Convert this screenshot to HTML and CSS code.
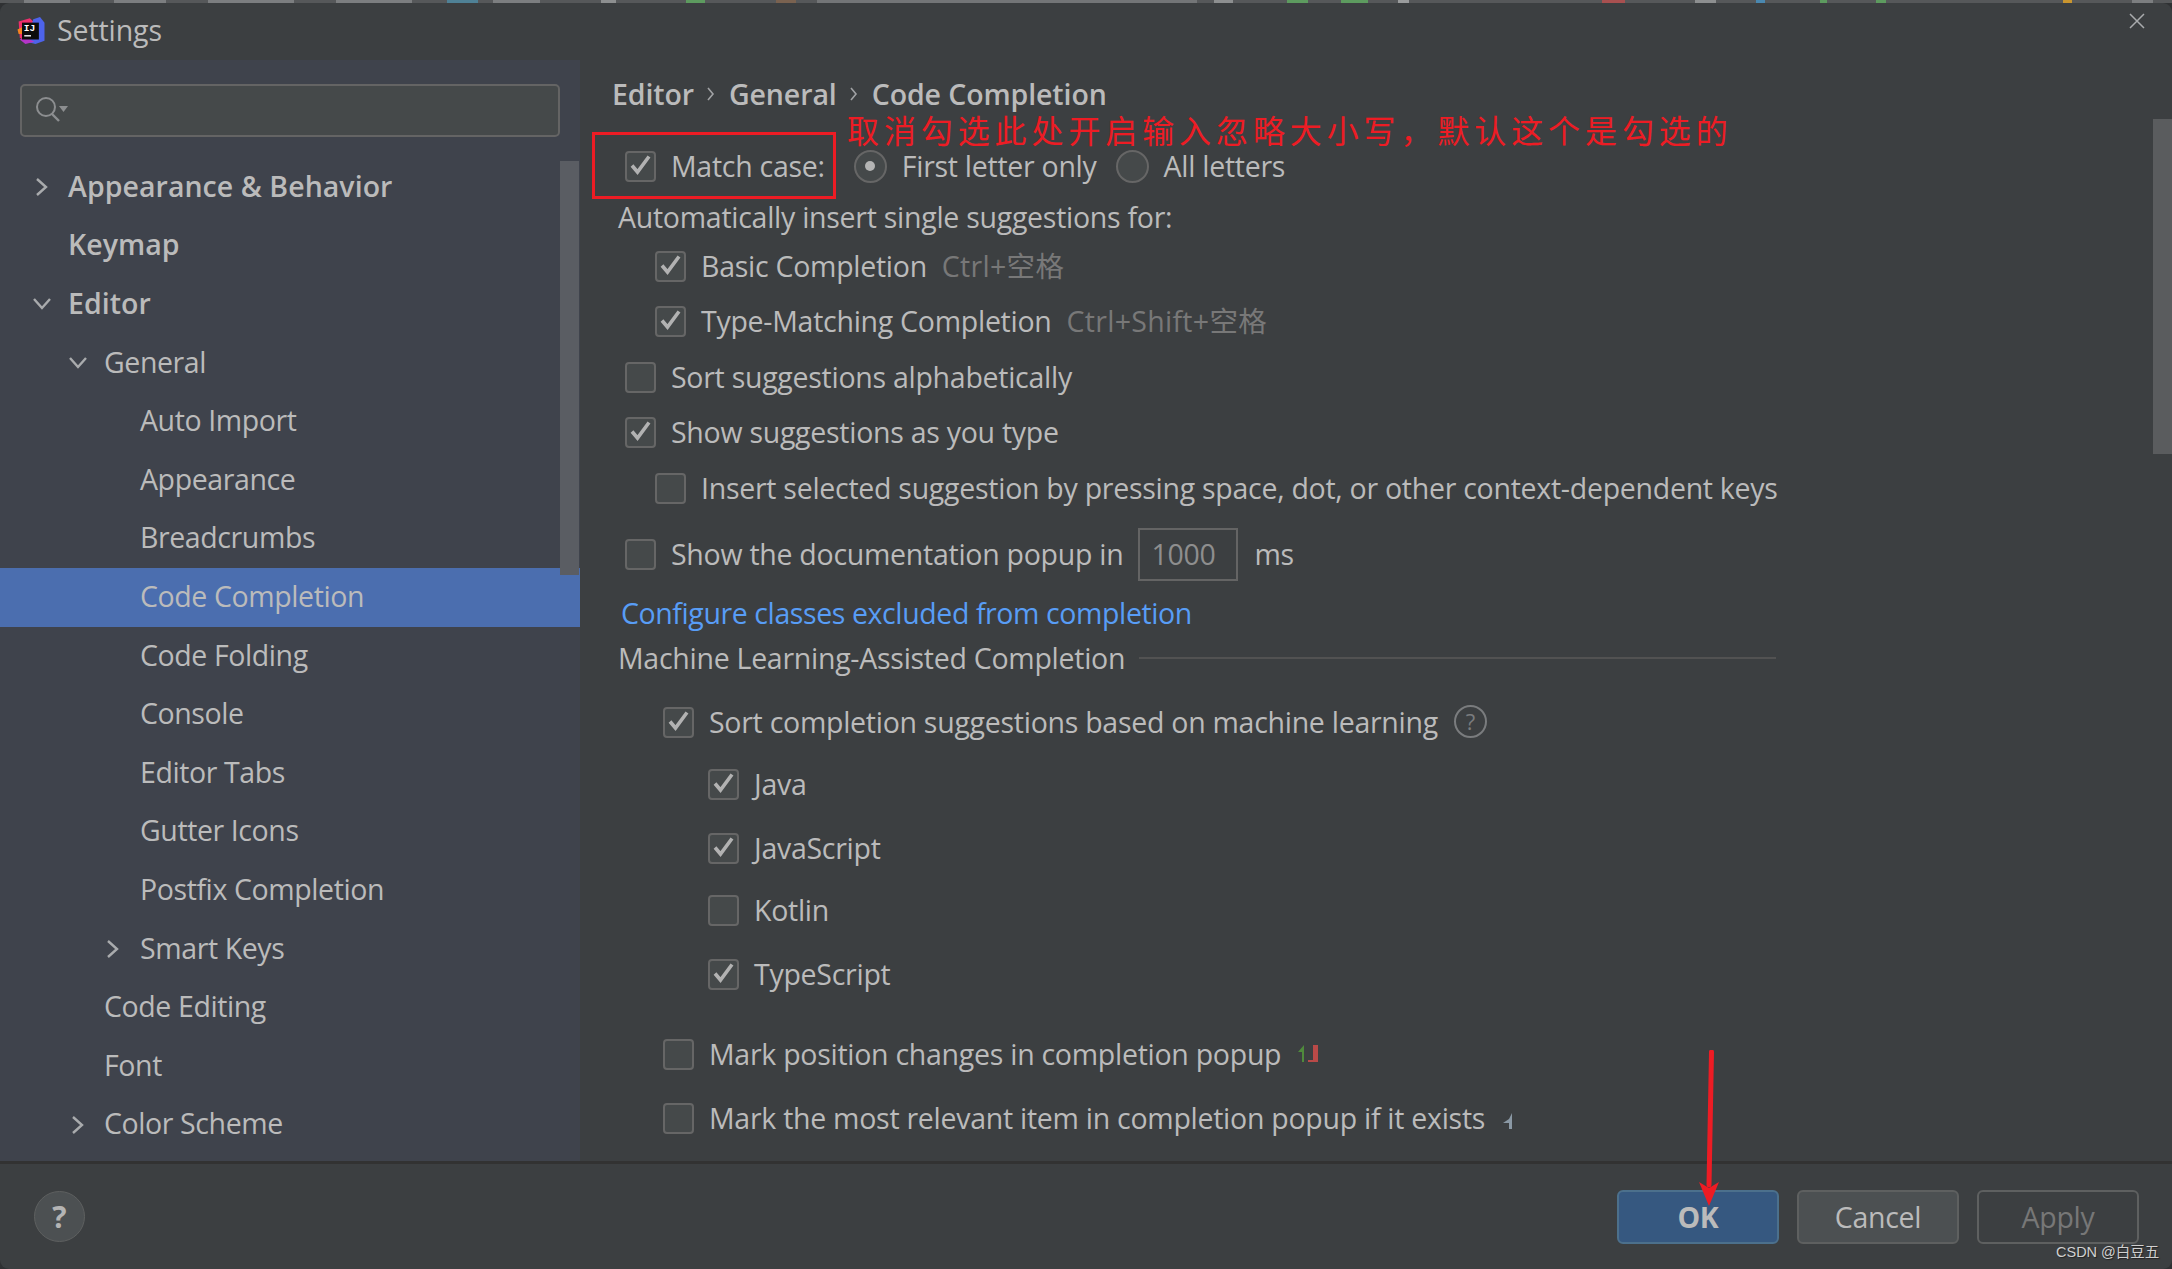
FILE: index.html
```html
<!DOCTYPE html>
<html lang="en">
<head>
  <meta charset="UTF-8">
  <title>Settings</title>
  <link rel="stylesheet" href="styles.css">
</head>
<body>
  <svg class="defs" width="0" height="0">
    <symbol id="tick" viewBox="0 0 31 31">
      <path d="M7 15.500l5.500 6.500L24 6.500" fill="none" stroke="#b2b2b2" stroke-width="3.600"/>
    </symbol>
    <symbol id="chev-r" viewBox="0 0 14 20">
      <path d="M2 2l9 8-9 8" fill="none" stroke="#a9abad" stroke-width="2.400"/>
    </symbol>
    <symbol id="chev-d" viewBox="0 0 20 14">
      <path d="M2 2l8 9 8-9" fill="none" stroke="#a9abad" stroke-width="2.400"/>
    </symbol>
  </svg>

  <!-- editor window peeking out above the dialog -->
  <div class="backdrop"></div>

  <div class="dialog">
    <header class="titlebar">
      <svg class="logo" width="28" height="27" viewBox="0 0 24 24">
        <path d="M1 4l10-3 3 3-8 18-4-4z" fill="#ee2d6c"/>
        <path d="M0 11l4-2v6l-3 0z" fill="#f58220"/>
        <path d="M14 2l6-2 4 5v16l-8 3-8-2z" fill="#4d63ea"/>
        <path d="M2 20l5 4 8-2-8-4z" fill="#b435c8"/>
        <rect x="4" y="5" width="15" height="15" fill="#0c0c0c"/>
        <text x="5.500" y="12.500" class="logo-text">IJ</text>
        <rect x="6" y="16" width="6" height="1.400" fill="#ddd"/>
      </svg>
      <span class="title">Settings</span>
      <svg class="close" width="16" height="16" viewBox="0 0 16 16">
        <path d="M1 1l14 14M15 1L1 15" stroke="#a9abad" stroke-width="1.500" fill="none"/>
      </svg>
    </header>

    <div class="main">
      <aside class="sidebar">
        <div class="search">
          <svg width="34" height="28" viewBox="0 0 34 28">
            <circle cx="12" cy="12" r="9" fill="none" stroke="#8c8e90" stroke-width="2"/>
            <path d="M18 19l7 7" stroke="#8c8e90" stroke-width="2.400"/>
            <path d="M25 11h9l-4.500 6z" fill="#8c8e90"/>
          </svg>
        </div>
        <ul class="tree">
          <li class="node bold lvl0"><svg class="chev-r"><use href="#chev-r"/></svg>Appearance &amp; Behavior</li>
          <li class="node bold lvl0">Keymap</li>
          <li class="node bold lvl0"><svg class="chev-d"><use href="#chev-d"/></svg>Editor</li>
          <li class="node lvl1"><svg class="chev-d"><use href="#chev-d"/></svg>General</li>
          <li class="node lvl2">Auto Import</li>
          <li class="node lvl2">Appearance</li>
          <li class="node lvl2">Breadcrumbs</li>
          <li class="node lvl2 selected">Code Completion</li>
          <li class="node lvl2">Code Folding</li>
          <li class="node lvl2">Console</li>
          <li class="node lvl2">Editor Tabs</li>
          <li class="node lvl2">Gutter Icons</li>
          <li class="node lvl2">Postfix Completion</li>
          <li class="node lvl2"><svg class="chev-r"><use href="#chev-r"/></svg>Smart Keys</li>
          <li class="node lvl1">Code Editing</li>
          <li class="node lvl1">Font</li>
          <li class="node lvl1"><svg class="chev-r"><use href="#chev-r"/></svg>Color Scheme</li>
        </ul>
        <div class="side-scroll"></div>
      </aside>

      <section class="content">
        <nav class="crumbs">
          <span>Editor</span><svg class="crumb-sep" width="8" height="14" viewBox="0 0 8 14"><path d="M1 1l5 6-5 6" fill="none" stroke="#a0a2a4" stroke-width="1.600"/></svg>
          <span>General</span><svg class="crumb-sep" width="8" height="14" viewBox="0 0 8 14"><path d="M1 1l5 6-5 6" fill="none" stroke="#a0a2a4" stroke-width="1.600"/></svg>
          <span>Code Completion</span>
        </nav>

        <div class="row base first">
          <span class="check"><svg><use href="#tick"/></svg></span><span class="label-match">Match case:</span>
          <span class="radio on"></span><span class="label-first">First letter only</span>
          <span class="radio"></span><span>All letters</span>
        </div>
        <div class="row text-row m11">Automatically insert single suggestions for:</div>
        <div class="row ind1 m9">
          <span class="check"><svg><use href="#tick"/></svg></span><span>Basic Completion</span><span class="hint">Ctrl+空格</span>
        </div>
        <div class="row ind1 m15">
          <span class="check"><svg><use href="#tick"/></svg></span><span>Type-Matching Completion</span><span class="hint">Ctrl+Shift+空格</span>
        </div>
        <div class="row base">
          <span class="check"></span><span>Sort suggestions alphabetically</span>
        </div>
        <div class="row base m15">
          <span class="check"><svg><use href="#tick"/></svg></span><span>Show suggestions as you type</span>
        </div>
        <div class="row ind1">
          <span class="check"></span><span>Insert selected suggestion by pressing space, dot, or other context-dependent keys</span>
        </div>
        <div class="row base m26">
          <span class="check"></span><span>Show the documentation popup in</span>
          <span class="num-input">1000</span><span>ms</span>
        </div>
        <a class="row link m19">Configure classes excluded from completion</a>
        <div class="row text-row m5 group-title">
          <span>Machine Learning-Assisted Completion</span><span class="rule"></span>
        </div>

        <div class="row ml m24">
          <span class="check"><svg><use href="#tick"/></svg></span><span>Sort completion suggestions based on machine learning</span>
          <span class="help-ring">?</span>
        </div>
        <div class="row ml2 m22">
          <span class="check"><svg><use href="#tick"/></svg></span><span>Java</span>
        </div>
        <div class="row ml2 m24">
          <span class="check"><svg><use href="#tick"/></svg></span><span>JavaScript</span>
        </div>
        <div class="row ml2 m22">
          <span class="check"></span><span>Kotlin</span>
        </div>
        <div class="row ml2 m24">
          <span class="check"><svg><use href="#tick"/></svg></span><span>TypeScript</span>
        </div>
        <div class="row ml m40">
          <span class="check"></span><span>Mark position changes in completion popup</span>
          <svg class="updown" width="21" height="18" viewBox="0 0 21 18">
            <path d="M5 17V7H1l6-7v17z" fill="#4f8a3c"/>
            <path d="M16 0h5v17H11v-2h5z" fill="#b94a48"/>
          </svg>
        </div>
        <div class="row ml m24">
          <span class="check"></span><span>Mark the most relevant item in completion popup if it exists</span>
          <svg class="relevant" width="10" height="16" viewBox="0 0 10 16">
            <path d="M9 0v16H6v-6H0l6-4z" fill="#8a98a4"/>
          </svg>
        </div>
        <div class="main-scroll"></div>
      </section>
    </div>

    <footer class="footer">
      <button class="round-help">?</button>
      <div class="buttons">
        <button class="btn primary">OK</button>
        <button class="btn">Cancel</button>
        <button class="btn disabled">Apply</button>
      </div>
    </footer>
  </div>

  <!-- hand-drawn notes on top of the dialog -->
  <div class="note-box"></div>
  <div class="note-text">取消勾选此处开启输入忽略大小写，默认这个是勾选的</div>
  <svg class="note-arrow" width="30" height="160" viewBox="0 0 30 160">
    <path d="M14.500 2L12 135" stroke="#ed1c24" stroke-width="5" stroke-linecap="round" fill="none"/>
    <path d="M2 132l10 6 10-6-10 24z" fill="#ed1c24"/>
  </svg>
  <div class="watermark">CSDN @白豆五</div>
</body>
</html>
```

FILE: styles.css
```css
* { box-sizing: border-box; }

html, body { height: 100%; }

body {
  margin: 0;
  overflow: hidden;
  position: relative;
  background: #2f3133;
  color: #bbbbbb;
  font-family: "Open Sans", "Noto Sans CJK SC", sans-serif;
  font-size: 28.5px;
  line-height: 34px;
  letter-spacing: -0.27px;
}

.defs { position: absolute; }

/* top strip: tops of the toolbar text and icons behind the dialog */
.backdrop {
  height: 3px;
  background: linear-gradient(90deg,
    #56585a 24px, #7c7e80 24px 70px, #56585a 70px 114px, #7c7e80 114px 166px,
    #56585a 166px 208px, #7c7e80 208px 294px, #56585a 294px 336px, #7c7e80 336px 412px,
    #56585a 412px 447px, #4f8196 447px 478px, #56585a 478px 493px, #7c7e80 493px 540px,
    #56585a 540px 601px, #8d8f90 601px 616px, #56585a 616px 686px, #5d9b5f 686px 705px,
    #56585a 705px 776px, #7a6250 776px 796px, #56585a 796px 817px, #737577 817px 1197px,
    #56585a 1197px 1214px, #8d8f90 1214px 1233px, #56585a 1233px 1287px, #5d9b5f 1287px 1308px,
    #56585a 1308px 1341px, #5d9b5f 1341px 1368px, #56585a 1368px 1398px, #9a9c9d 1398px 1409px,
    #56585a 1409px 1602px, #a85050 1602px 1625px, #56585a 1625px 1695px, #8d8f90 1695px 1716px,
    #56585a 1716px 1756px, #4a88b0 1756px 1765px, #56585a 1765px 1820px, #5d9b5f 1820px 1827px,
    #56585a 1827px 1876px, #5d9b5f 1876px 1886px, #56585a 1886px 2063px, #c9952f 2063px 2072px,
    #56585a 2072px 2132px, #7c7e80 2132px 2153px, #56585a 2153px);
}

.dialog {
  height: 1266px;
  display: flex;
  flex-direction: column;
  background: #3c3f41;
  border-radius: 9px;
  overflow: hidden;
}

/* title bar */
.titlebar {
  height: 57px;
  flex: none;
  display: flex;
  align-items: center;
  padding: 0 27px 3px 17px;
}
.logo { margin-right: 12px; }
.logo-text {
  font: bold 8.500px "Liberation Mono", monospace;
  fill: #ffffff;
  letter-spacing: 0;
}
.title { font-size: 28.5px; letter-spacing: -0.1px; }
.close { margin-left: auto; margin-top: -19px; }

.main {
  flex: 1;
  min-height: 0;
  display: flex;
}

/* left tree */
.sidebar {
  width: 580px;
  flex: none;
  position: relative;
  overflow: hidden;
  background: #3f434c;
  padding-top: 24px;
}
.search {
  width: 540px;
  height: 53px;
  margin-left: 20px;
  padding: 9px 0 0 12px;
  background: #45494a;
  border: 2.500px solid #646464;
  border-radius: 5px;
}
.tree {
  list-style: none;
  margin: 21px 0 0;
  padding: 0;
}
.node {
  height: 58.6px;
  padding-bottom: 3px;
  display: flex;
  align-items: center;
  position: relative;
  white-space: nowrap;
  letter-spacing: -0.4px;
}
.bold { font-weight: 600; letter-spacing: 0.05px; }
.lvl0 { padding-left: 68px; }
.lvl1 { padding-left: 104px; }
.lvl2 { padding-left: 140px; }
.selected { background: #4b6eaf; }
.chev-r, .chev-d { position: absolute; top: 50%; }
.chev-r { width: 14px; height: 20px; margin-top: -10px; }
.chev-d { width: 20px; height: 14px; margin-top: -7px; }
.lvl0 .chev-r { left: 35px; }
.lvl0 .chev-d { left: 32px; }
.lvl1 .chev-r { left: 71px; }
.lvl1 .chev-d { left: 68px; }
.lvl2 .chev-r { left: 106px; }

.side-scroll {
  position: absolute;
  left: 560px;
  top: 101px;
  width: 19px;
  height: 414px;
  background: #5a5d63;
}

/* options panel */
.content {
  flex: 1;
  position: relative;
  padding: 14px 0 0 32px;
}
.crumbs {
  height: 40px;
  display: flex;
  align-items: center;
  font-weight: 600;
  letter-spacing: -0.1px;
  line-height: 30px;
}
.crumb-sep { margin: 0 14px 0 13px; }

.row {
  height: 40px;
  margin-top: 16px;
  display: flex;
  align-items: center;
  white-space: nowrap;
}
.first { margin-top: 32px; }
.m5 { margin-top: 5px; }
.m9 { margin-top: 9px; }
.m11 { margin-top: 11px; }
.m15 { margin-top: 15px; }
.m19 { margin-top: 19px; }
.m22 { margin-top: 22px; }
.m24 { margin-top: 24px; }
.m26 { margin-top: 26px; }
.m40 { margin-top: 40px; }

.base { padding-left: 13px; }
.ind1 { padding-left: 43px; }
.ml { padding-left: 51px; }
.ml2 { padding-left: 96px; }
.text-row { padding-left: 6px; }

.check {
  width: 31px;
  height: 31px;
  flex: none;
  margin-right: 15px;
  background: #45494a;
  border: 2.500px solid #666666;
  border-radius: 4px;
  position: relative;
}
.check svg {
  position: absolute;
  left: -2.500px;
  top: -2.500px;
  width: 31px;
  height: 31px;
}

.radio {
  width: 33px;
  height: 33px;
  flex: none;
  margin-right: 15px;
  border: 2.500px solid #666666;
  border-radius: 50%;
  background: #45494a;
  position: relative;
}
.radio.on::after {
  content: "";
  position: absolute;
  left: 9px;
  top: 9px;
  width: 10px;
  height: 10px;
  border-radius: 50%;
  background: #b4b4b4;
}
.label-match { margin-right: 29px; }
.label-first { margin-right: 19px; }

.hint {
  color: #787878;
  margin-left: 15px;
  letter-spacing: 0.3px;
}

.num-input {
  width: 100px;
  height: 53px;
  flex: none;
  margin: 0 16px 0 15px;
  padding-left: 11px;
  display: flex;
  align-items: center;
  color: #8e8e8e;
  border: 2.500px solid #646464;
}

.link {
  padding-left: 9px;
  color: #589df6;
  letter-spacing: -0.4px;
}

.group-title { gap: 14px; }
.rule {
  width: 637px;
  height: 2.500px;
  background: #525252;
}

.help-ring {
  width: 33px;
  height: 33px;
  flex: none;
  margin-left: 16px;
  margin-top: -2px;
  border: 2px solid #7a7c7e;
  border-radius: 50%;
  color: #7a7c7e;
  font-size: 22px;
  letter-spacing: 0;
  display: flex;
  align-items: center;
  justify-content: center;
}
.updown { margin-left: 16px; }
.relevant { margin-left: 18px; margin-top: 6px; }

.main-scroll {
  position: absolute;
  right: 0;
  top: 59px;
  width: 19px;
  height: 335px;
  background: #5a5c5e;
}

/* bottom buttons */
.footer {
  height: 108px;
  flex: none;
  display: flex;
  align-items: center;
  justify-content: space-between;
  padding: 0 33px 0 34px;
  border-top: 3px solid #323232;
}
.round-help {
  width: 51px;
  height: 51px;
  padding: 0;
  border: 1.500px solid #5e6060;
  border-radius: 50%;
  background: #4c5052;
  color: #b4b4b4;
  font: bold 30px "Open Sans", sans-serif;
}
.buttons {
  display: flex;
  gap: 18px;
}
.btn {
  width: 162px;
  height: 54px;
  padding: 0;
  background: #4c5052;
  border: 2.500px solid #5e6060;
  border-radius: 6px;
  color: #bbbbbb;
  font: 28.5px "Open Sans", sans-serif;
  letter-spacing: -0.27px;
}
.btn.primary {
  background: #365880;
  border-color: #4c708c;
  font-weight: 700;
}
.btn.disabled {
  background: transparent;
  color: #777777;
}

/* annotations */
.note-box {
  position: absolute;
  left: 592px;
  top: 132px;
  width: 244px;
  height: 67px;
  border: 3px solid #ed1c24;
}
.note-text {
  position: absolute;
  left: 847px;
  top: 112px;
  color: #ed1c24;
  font-family: "Noto Sans CJK SC", sans-serif;
  font-size: 32px;
  letter-spacing: 4.9px;
  line-height: 34px;
  white-space: nowrap;
}
.note-arrow {
  position: absolute;
  left: 1697px;
  top: 1050px;
}
.watermark {
  position: absolute;
  left: 2056px;
  top: 1243px;
  color: #d0d0d0;
  font-family: "Liberation Sans", "Noto Sans CJK SC", sans-serif;
  font-size: 14.5px;
  line-height: 18px;
  letter-spacing: 0;
  text-shadow: 1px 1px 1px #222;
  white-space: nowrap;
}
```
